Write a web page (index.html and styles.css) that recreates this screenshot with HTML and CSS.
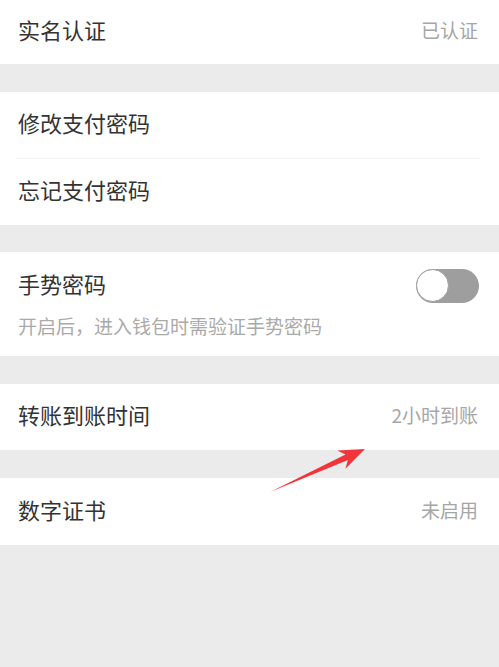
FILE: index.html
```html
<!DOCTYPE html>
<html lang="zh-CN">
<head>
<meta charset="utf-8">
<title>支付设置</title>
<link rel="stylesheet" href="styles.css">
</head>
<body>
<div class="page">
  <section class="group first">
    <div class="row">
      <span class="label">实名认证</span>
      <span class="value">已认证</span>
    </div>
  </section>

  <section class="group">
    <div class="row">
      <span class="label">修改支付密码</span>
    </div>
    <div class="divider"></div>
    <div class="row">
      <span class="label">忘记支付密码</span>
    </div>
  </section>

  <section class="group gesture">
    <div class="gesture-head">
      <span class="label">手势密码</span>
      <span class="toggle"><span class="knob"></span></span>
    </div>
    <div class="hint">开启后，进入钱包时需验证手势密码</div>
  </section>

  <section class="group">
    <div class="row">
      <span class="label">转账到账时间</span>
      <span class="value">2小时到账</span>
    </div>
  </section>

  <section class="group">
    <div class="row tall">
      <span class="label">数字证书</span>
      <span class="value">未启用</span>
    </div>
  </section>

  <svg class="arrow" width="499" height="667" viewBox="0 0 499 667" aria-hidden="true">
    <polygon points="270,492 345.5,454.6 337.2,450.6 365,449 345.4,468.8 347.9,460.0" fill="#f2353a"/>
  </svg>
</div>
</body>
</html>
```

FILE: styles.css
```css
html, body {
  margin: 0;
  padding: 0;
  background: #ebebeb;
}

.page {
  position: relative;
  width: 499px;
  height: 667px;
  background: #ebebeb;
  font-family: "Noto Sans CJK SC", "Noto Sans", sans-serif;
  display: flex;
  flex-direction: column;
  gap: 28px;
}

.group {
  background: #ffffff;
}

.row {
  height: 66px;
  display: flex;
  align-items: center;
  justify-content: space-between;
  padding: 0 21px 0 18px;
}

.first .row {
  height: 64px;
  padding-bottom: 1px;
  box-sizing: border-box;
}

.row.tall {
  height: 67px;
}

.label {
  font-size: 22px;
  color: #333333;
  line-height: 1;
  padding-bottom: 6px;
}

.value {
  font-size: 19px;
  color: #a6a6a6;
  line-height: 1;
  padding-bottom: 5px;
}

.divider {
  height: 1px;
  background: #f0f0f0;
  margin: 0 19px 0 16px;
}

.gesture {
  height: 104px;
  box-sizing: border-box;
  padding: 17px 20px 0 18px;
  margin-top: -1px;
}

.gesture-head {
  display: flex;
  align-items: center;
  justify-content: space-between;
  height: 34px;
}

.hint {
  margin-top: 13px;
  font-size: 19px;
  line-height: 1;
  color: #aaaaaa;
}

.toggle {
  position: relative;
  width: 63px;
  height: 34px;
  border-radius: 17px;
  background: #9e9e9e;
}

.knob {
  position: absolute;
  left: 0;
  top: 0;
  width: 31px;
  height: 31px;
  border-radius: 50%;
  background: #ffffff;
  border: 1.5px solid #9e9e9e;
}

.arrow {
  position: absolute;
  left: 0;
  top: 0;
  pointer-events: none;
}
```
